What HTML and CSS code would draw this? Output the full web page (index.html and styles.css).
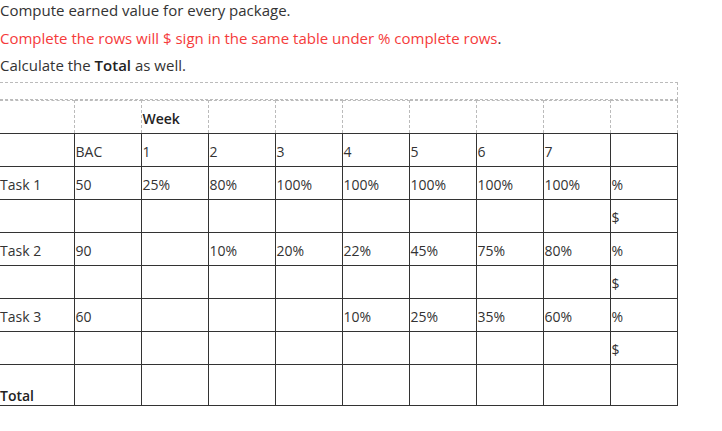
FILE: index.html
```html
<!DOCTYPE html>
<html>
<head>
<meta charset="utf-8">
<link rel="stylesheet" href="styles.css">
</head>
<body>
<div class="intro">
  <p>Compute earned value for every package.</p>
  <p class="red">Complete the rows will $ sign in the same table under % complete rows<span class="dark">.</span></p>
  <p class="last">Calculate the <b>Total</b> as well.</p>
</div>
<div class="sheet">
  <div class="top-band"></div>
  <table class="ev">
    <colgroup>
      <col class="c-task"><col class="c"><col class="c"><col class="c"><col class="c"><col class="c"><col class="c"><col class="c"><col class="c"><col class="c">
    </colgroup>
    <tr class="week"><td></td><td></td><td><b>Week</b></td><td></td><td></td><td></td><td></td><td></td><td></td><td></td></tr>
    <tr><td></td><td>BAC</td><td>1</td><td>2</td><td>3</td><td>4</td><td>5</td><td>6</td><td>7</td><td></td></tr>
    <tr><td>Task 1</td><td>50</td><td>25%</td><td>80%</td><td>100%</td><td>100%</td><td>100%</td><td>100%</td><td>100%</td><td>%</td></tr>
    <tr><td></td><td></td><td></td><td></td><td></td><td></td><td></td><td></td><td></td><td>$</td></tr>
    <tr><td>Task 2</td><td>90</td><td></td><td>10%</td><td>20%</td><td>22%</td><td>45%</td><td>75%</td><td>80%</td><td>%</td></tr>
    <tr><td></td><td></td><td></td><td></td><td></td><td></td><td></td><td></td><td></td><td>$</td></tr>
    <tr><td>Task 3</td><td>60</td><td></td><td></td><td></td><td>10%</td><td>25%</td><td>35%</td><td>60%</td><td>%</td></tr>
    <tr><td></td><td></td><td></td><td></td><td></td><td></td><td></td><td></td><td></td><td>$</td></tr>
    <tr class="total"><td><b>Total</b></td><td></td><td></td><td></td><td></td><td></td><td></td><td></td><td></td><td></td></tr>
  </table>
</div>
</body>
</html>
```

FILE: styles.css
```css
* { box-sizing: border-box; }
body {
  margin: 0;
  background: #fff;
  color: #333;
  font-family: "Open Sans", "Noto Sans", sans-serif;
  font-size: 14px;
}
.intro p {
  margin: 0 0 7.5px;
  line-height: 20px;
  font-size: 15px;
}
.intro p.last { margin-bottom: 0; }
.red { color: #f53b3b; }
.red .dark { color: #333; }
b { font-weight: 600; color: #222; }

.sheet {
  margin-top: 7px;
  width: 678px;
}
.top-band {
  height: 18px;
  border: 1px dashed #bbb;
  border-left: none;
}

.ev {
  border-collapse: collapse;
  table-layout: fixed;
  width: 677.5px;
}
.c-task { width: 74px; }
.c { width: 67px; }

.ev td {
  border: 1px solid #333;
  height: 33px;
  padding: 2px 1px 0;
  line-height: 19px;
  vertical-align: middle;
  white-space: nowrap;
}
.ev td:first-child { border-left: none; padding-left: 0; }

.ev .week td {
  border-top: 1px dashed #bbb;
  border-left: 1px dashed #bbb;
  border-right: 1px dashed #bbb;
}
.ev .week td:first-child { border-left: none; }
.ev .total td {
  height: 41px;
  vertical-align: bottom;
  padding-bottom: 0;
}
```
